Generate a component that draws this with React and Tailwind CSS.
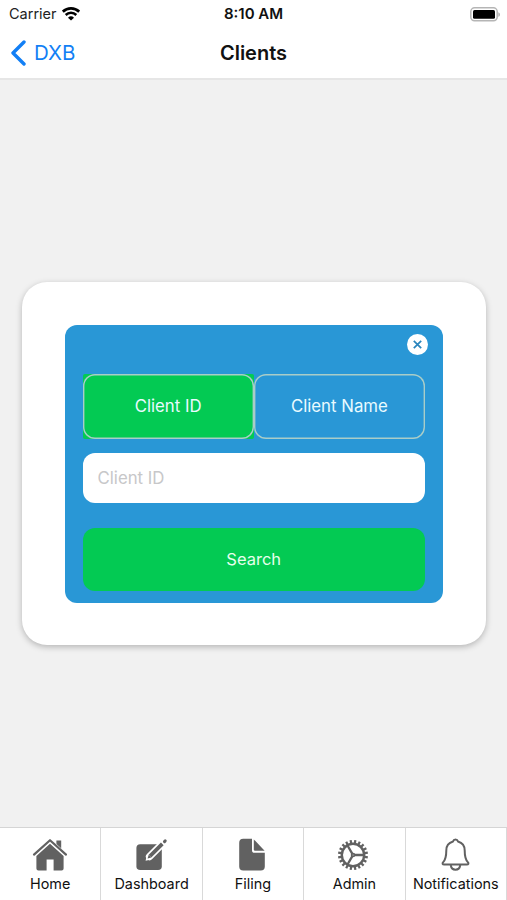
import { useState } from "react"

const HomeIcon = () => (
  <svg width="36" height="34" viewBox="0 0 36 34">
    <path d="M24.4 2.400h4.800v9.800l-4.800-4.600z" fill="#616161" />
    <path d="M2.200 17.300 18 3.200l15.800 14.100" fill="none" stroke="#fff" strokeWidth="4.400" />
    <path d="M2 16.600 18 2.200l16 14.400" fill="none" stroke="#616161" strokeWidth="2.200" strokeLinecap="round" strokeLinejoin="round" />
    <path d="M18 5.800 31.600 18V30.400a2 2 0 0 1-2 2H21.600V21.600H14.600V32.400H6.400a2 2 0 0 1-2-2V18z" fill="#616161" />
  </svg>
)

const DashboardIcon = () => (
  <svg width="36" height="34" viewBox="0 0 36 34">
    <rect x="2.400" y="6.200" width="25.400" height="25.800" rx="3.800" fill="#616161" />
    <path d="M30.600 3.500 15.600 18.500" stroke="#fff" strokeWidth="7.400" strokeLinecap="round" />
    <path d="m11.600 22.700 1.200-5.600 4.400 4.400z" fill="#fff" />
    <path d="M28.300 5.800 16 18.100" stroke="#616161" strokeWidth="3.800" />
    <path d="m13.600 20.500 1.100-3.700 2.600 2.600z" fill="#616161" />
    <path d="m30.500 3.600.7-.7" stroke="#616161" strokeWidth="3" strokeLinecap="round" />
  </svg>
)

const FilingIcon = () => (
  <svg width="36" height="34" viewBox="0 0 36 34">
    <path d="M8.200.8H17v11.400a2.600 2.600 0 0 0 2.600 2.600h10.200v13.800a4 4 0 0 1-4 4H8.200a4 4 0 0 1-4-4V4.800a4 4 0 0 1 4-4z" fill="#616161" />
    <path d="M18.800 1.400 29.600 12.700H20a1.200 1.200 0 0 1-1.200-1.200z" fill="#616161" />
  </svg>
)

const teeth = Array.from({ length: 20 }, (_, i) => i * 18 + 9)

const AdminIcon = () => (
  <svg width="36" height="34" viewBox="0 0 36 34">
    <g transform="translate(17 17)" fill="none" stroke="#616161">
      <circle r="11.200" strokeWidth="2.400" />
      {teeth.map(a => (
        <path key={a} d="M0-11.600V-15" strokeWidth="2.200" transform={`rotate(${a})`} />
      ))}
      <path d="M1 0H11M-.5-.9-5.500-9.500M-.5.9-5.500 9.500" strokeWidth="2.300" />
      <circle r="1.400" strokeWidth="1.800" />
    </g>
  </svg>
)

const BellIcon = () => (
  <svg width="36" height="34" viewBox="0 0 36 34" fill="none" stroke="#616161" strokeWidth="2" strokeLinejoin="round">
    <path d="M15 3.500a2.600 2.600 0 0 1 5 0c4.300 1.200 6.700 4.400 6.700 9 0 7 .8 9.200 3.100 11.600 1.200 1.200.6 2.500-.9 2.500H6.100c-1.500 0-2.100-1.300-.9-2.500 2.300-2.400 3.100-4.600 3.100-11.600 0-4.600 2.400-7.800 6.700-9z" />
    <path d="M12.700 27c.5 3.100 2.200 4.700 4.800 4.700s4.300-1.600 4.800-4.700" />
  </svg>
)

const WifiIcon = () => (
  <svg width="18" height="14" viewBox="0 0 18 14" fill="none" stroke="#000">
    <path d="M.8 4.700a11.800 11.800 0 0 1 16.400 0" strokeWidth="2.700" />
    <path d="M3.700 8a7.500 7.500 0 0 1 10.600 0" strokeWidth="2.500" />
    <path d="M9 13.600 6 10.700a4.300 4.300 0 0 1 6 0z" fill="#000" stroke="none" />
  </svg>
)

const BatteryIcon = () => (
  <svg width="31" height="15" viewBox="0 0 31 15">
    <rect x=".8" y=".8" width="26.400" height="13" rx="3.800" fill="#fff" stroke="#b5b5b5" strokeWidth="1.500" />
    <rect x="3" y="2.900" width="22" height="8.900" rx="1.500" fill="#000" />
    <path d="M28.400 5.200c2 .8 2 3.800 0 4.600z" fill="#aaa" />
  </svg>
)

const tabs = [
  { name: "Home", icon: HomeIcon },
  { name: "Dashboard", icon: DashboardIcon },
  { name: "Filing", icon: FilingIcon },
  { name: "Admin", icon: AdminIcon },
  { name: "Notifications", icon: BellIcon },
]

const modes = ["Client ID", "Client Name"]

export default function App() {
  const [mode, setMode] = useState("Client ID")

  return (
    <div className="flex h-[900px] w-[507px] flex-col overflow-hidden bg-[#f1f1f1] font-['Inter',sans-serif] text-[#111]">
      <header className="h-20 shrink-0 border-b-2 border-[#e6e6e6] bg-white">
        <div className="grid h-7 grid-cols-3 items-center pr-[6px] pl-[9px]">
          <div className="flex items-center gap-[5px] text-[14.500px] text-[#222]">
            <span>Carrier</span>
            <WifiIcon />
          </div>
          <span className="-ml-[3px] text-center text-[15px] font-semibold">8:10 AM</span>
          <div className="flex justify-end"><BatteryIcon /></div>
        </div>
        <div className="grid h-[50px] grid-cols-3 items-center px-[10px]">
          <button className="flex items-center gap-[7px] text-left text-[20.500px] text-[#127ff5]">
            <svg width="17" height="26" viewBox="0 0 17 26" fill="none" stroke="#127ff5" strokeWidth="3.400" strokeLinecap="round" strokeLinejoin="round">
              <path d="M14 2 3 13l11 11" />
            </svg>
            DXB
          </button>
          <h1 className="text-center text-[20px] font-semibold">Clients</h1>
        </div>
      </header>

      <main className="flex flex-1 flex-col px-[22px] pt-[202px]">
        <div className="h-[363px] w-[464px] rounded-[25px] bg-white pt-[43px] pr-[43px] pl-[42.500px] shadow-[0_2px_6px_rgba(0,0,0,0.25)]">
          <div className="flex h-[277.500px] flex-col rounded-xl bg-[#2997d6] px-[18px] pt-[9px]">
            <button className="mr-[-3px] flex size-[21px] items-center justify-center self-end rounded-full bg-white">
              <svg width="9" height="9" viewBox="0 0 9 9" stroke="#2a85bd" strokeWidth="1.700">
                <path d="m.8.8 7.400 7.400M8.200.8.8 8.200" />
              </svg>
            </button>

            <div className="mt-[19px] flex h-[65px]">
              {modes.map(m => (
                <div key={m} className={m === mode ? "flex-1 rounded-[2px] bg-[#03ca53]" : "flex-1"}>
                  <button onClick={() => setMode(m)} className="h-full w-full rounded-xl text-[16.800px] text-[#e9fbff] shadow-[inset_0_0_0_1.400px_#a9cdc8]">{m}</button>
                </div>
              ))}
            </div>

            <input placeholder={mode} className="mt-[14px] h-[50px] w-full shrink-0 rounded-xl bg-white px-[15px] text-[16.800px] outline-none placeholder:text-[#c7c7c9]" />
            <button className="mt-[25px] h-[62.500px] shrink-0 rounded-xl bg-[#03ca53] text-[16.500px] text-[#e6ffec]">Search</button>
          </div>
        </div>
      </main>

      <nav className="grid h-[73px] shrink-0 grid-cols-5 border-t border-[#d5d5d5] bg-white">
        {tabs.map(({ name, icon: Icon }) => (
          <button key={name} className="flex flex-col items-center border-r border-[#d9d9d9] pt-[10px]">
            <Icon />
            <span className="mt-[2px] text-[14.400px] leading-5 whitespace-nowrap">{name}</span>
          </button>
        ))}
      </nav>
    </div>
  )
}
